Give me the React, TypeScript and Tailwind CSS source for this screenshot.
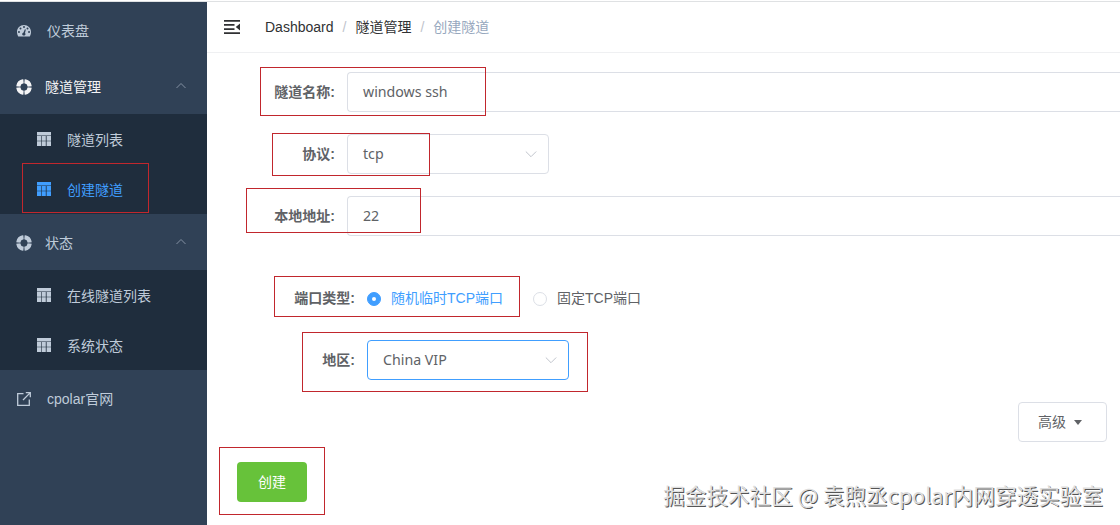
import type { ReactNode } from "react";
import clsx from "clsx";

interface IconProps {
  className?: string;
}

function DashboardIcon({ className }: IconProps) {
  return (
    <svg className={className} width="14" height="14" viewBox="0 0 128 128" fill="currentColor">
      <path
        fillRule="evenodd"
        d="M64 10C28.700 10 0 38.700 0 74c0 14 3.500 28 10.100 38.500 1 1.500 2.700 2.500 4.500 2.500h98.800c1.800 0 3.500-1 4.500-2.500C124.500 102 128 88 128 74c0-35.300-28.700-64-64-64zM18 65a9 9 0 1 1 0 18 9 9 0 0 1 0-18zm14-32a9 9 0 1 1 0 18 9 9 0 0 1 0-18zm32-14a9 9 0 1 1 0 18 9 9 0 0 1 0-18zm32 14a9 9 0 1 1 0 18 9 9 0 0 1 0-18zm14 32a9 9 0 1 1 0 18 9 9 0 0 1 0-18zM72 48l9 2-8 32c6 5 6 13 2 18-6 8-19 8-25 0-5-8-2-18 8-21z"
      />
    </svg>
  );
}

function RingIcon({ className }: IconProps) {
  return (
    <svg className={className} width="16" height="16" viewBox="0 0 16 16" fill="none" stroke="currentColor" strokeWidth="4">
      <circle cx="8" cy="8" r="5.700" opacity="0.350" />
      <circle cx="8" cy="8" r="5.700" pathLength="100" strokeDasharray="20.500 4.500" strokeDashoffset="-2.250" />
    </svg>
  );
}

function TableIcon({ className }: IconProps) {
  return (
    <svg className={className} width="14" height="14" viewBox="0 0 14 14" fill="currentColor">
      <path d="M0 0h14v3.600H0zM0 4h4.400v10H0zM5 4h3.800v10H5zM9.600 4H14v10H9.600z" />
      <path d="M0 9h14" stroke="#1f2d3d" strokeWidth="0.500" />
    </svg>
  );
}

function LinkIcon({ className }: IconProps) {
  return (
    <svg className={className} width="14" height="14" viewBox="0 0 14 14" fill="none" stroke="currentColor" strokeWidth="1.300">
      <path d="M6.500 1.700H.7v11.600h11.600V7.500M8.800.7h4.500v4.500M13.100.9 6 8" />
    </svg>
  );
}

function FoldIcon() {
  return (
    <svg width="16" height="14" viewBox="0 0 16 14" fill="currentColor">
      <path d="M0 0h16v1.700H0zM0 4h10.500v1.700H0zM0 8.200h10.500v1.700H0zM0 12.300h16V14H0zM16 3.500v7L11.800 7z" />
    </svg>
  );
}

function Chevron({ up, className }: IconProps & { up?: boolean }) {
  return (
    <svg className={className} width="12" height="12" viewBox="0 0 12 12" fill="none" stroke="currentColor">
      <path d={up ? "M1.500 8 6 3.500 10.500 8" : "M.8 3.500 6 8.700l5.200-5.200"} />
    </svg>
  );
}

function MenuItem({ icon, label }: { icon: ReactNode; label: string }) {
  return (
    <li className="flex h-14 items-center gap-4 pt-px pl-[17px]">
      {icon}
      <span>{label}</span>
    </li>
  );
}

function SubMenu({ label, active, children }: { label: string; active?: boolean; children: ReactNode }) {
  return (
    <li>
      <div className={clsx("flex h-14 items-center pt-0.5 pl-4", active && "text-[#f4f4f5]")}>
        <RingIcon />
        <span className="ml-[13px]">{label}</span>
        <Chevron up className="mr-5 mb-0.5 ml-auto text-[#8491a3]" />
      </div>
      <ul className="bg-[#1f2d3d]">{children}</ul>
    </li>
  );
}

function SubItem({ label, active }: { label: string; active?: boolean }) {
  return (
    <li className={clsx("flex h-[50px] items-center gap-4 pl-[37px]", active && "text-[#409eff]")}>
      <TableIcon />
      <span className="pt-0.5">{label}</span>
    </li>
  );
}

function Sidebar() {
  return (
    <nav className="w-[207px] shrink-0 bg-[#304156] text-[#bfcbd9]">
      <ul>
        <MenuItem icon={<DashboardIcon />} label="仪表盘" />
        <SubMenu label="隧道管理" active>
          <SubItem label="隧道列表" />
          <SubItem label="创建隧道" active />
        </SubMenu>
        <SubMenu label="状态">
          <SubItem label="在线隧道列表" />
          <SubItem label="系统状态" />
        </SubMenu>
        <MenuItem icon={<LinkIcon />} label="cpolar官网" />
      </ul>
    </nav>
  );
}

function FormRow({ label, nested, children }: { label: string; nested?: boolean; children: ReactNode }) {
  return (
    <div className="flex h-10 items-center">
      <span className={clsx("shrink-0 pr-3 text-right font-bold", nested ? "w-40" : "w-[140px]")}>{label}</span>
      {children}
    </div>
  );
}

const fieldFont = "font-['Noto_Sans','Noto_Sans_CJK_SC',sans-serif] text-[14.2px]";

function TextField({ value }: { value: string }) {
  return (
    <div className={clsx("flex h-10 flex-1 items-center rounded-l border border-r-0 border-[#dcdfe6] pl-[15px]", fieldFont)}>
      {value}
    </div>
  );
}

function SelectField({ value, focused }: { value: string; focused?: boolean }) {
  return (
    <div
      className={clsx(
        "flex h-10 w-[202px] items-center justify-between rounded border pr-[11px] pl-[15px]",
        fieldFont,
        focused ? "border-[#409eff]" : "border-[#dcdfe6]",
      )}
    >
      {value}
      <Chevron className="text-[#c0c4cc]" />
    </div>
  );
}

function Radio({ label, checked }: { label: string; checked?: boolean }) {
  return (
    <span className={clsx("flex items-center gap-[10px]", checked && "text-[#409eff]")}>
      <span
        className={clsx(
          "mt-px flex size-[14px] items-center justify-center rounded-full border",
          checked ? "border-[#409eff] bg-[#409eff]" : "border-[#dcdfe6] bg-white",
        )}
      >
        {checked && <span className="size-1 rounded-full bg-white" />}
      </span>
      {label}
    </span>
  );
}

// Red outlines that mark the fields to fill in
function Highlights() {
  return (
    <div className="pointer-events-none *:absolute *:border *:border-[#c1272d]">
      <div className="top-[163px] left-[22px] h-[50px] w-[127px]" />
      <div className="top-[67px] left-[260px] h-[49px] w-[226px]" />
      <div className="top-[133px] left-[272px] h-[43px] w-[158px]" />
      <div className="top-[188px] left-[246px] h-[45px] w-[175px]" />
      <div className="top-[276px] left-[274px] h-[41px] w-[246px]" />
      <div className="top-[332px] left-[302px] h-[60px] w-[286px]" />
      <div className="top-[447px] left-[219px] h-[68px] w-[106px]" />
    </div>
  );
}

export default function App() {
  return (
    <div className="relative flex h-[525px] w-[1120px] flex-col overflow-hidden bg-white font-['Liberation_Sans','Noto_Sans_CJK_SC',sans-serif] text-sm whitespace-nowrap text-[#606266]">
      <div className="h-0.5 shrink-0 border-b border-[#dfe1e3]" />
      <div className="flex min-h-0 flex-1">
        <Sidebar />
        <main className="min-w-0 flex-1">
          <header className="flex h-[51px] items-center border-b border-[#eff0f2] pl-[17px] text-[#303133]">
            <FoldIcon />
            <div className="ml-[25px] flex gap-[9px]">
              <span>Dashboard</span>
              <span className="text-[#c0c4cc]">/</span>
              <span>隧道管理</span>
              <span className="text-[#c0c4cc]">/</span>
              <span className="text-[#97a8be]">创建隧道</span>
            </div>
          </header>

          <div className="flex flex-col pt-[19px]">
            <div className="flex flex-col gap-[22px]">
              <FormRow label="隧道名称:">
                <TextField value="windows ssh" />
              </FormRow>
              <FormRow label="协议:">
                <SelectField value="tcp" />
              </FormRow>
              <FormRow label="本地地址:">
                <TextField value="22" />
              </FormRow>
            </div>

            <div className="mt-[42px] flex flex-col gap-[22px]">
              <FormRow label="端口类型:" nested>
                <div className="flex gap-[30px]">
                  <Radio label="随机临时TCP端口" checked />
                  <Radio label="固定TCP端口" />
                </div>
              </FormRow>
              <FormRow label="地区:" nested>
                <SelectField value="China VIP" focused />
              </FormRow>
            </div>

            <button
              type="button"
              className="mt-[22px] mr-[13px] flex h-10 w-[89px] items-center gap-2 self-end rounded border border-[#dcdfe6] pl-[19px]"
            >
              高级
              <span className="border-x-[4.5px] border-t-[5px] border-x-transparent border-t-[#606266]" />
            </button>
            <button type="button" className="mt-5 ml-[30px] h-10 w-[70px] rounded bg-[#67c23a] text-white">
              创建
            </button>
          </div>
        </main>
      </div>

      <Highlights />
      <div className="absolute right-[17px] bottom-[13px] font-['Noto_Sans_CJK_SC',sans-serif] text-[21.6px] leading-[34px] text-[#dedede] [text-shadow:1px_1px_0_#555]">
        掘金技术社区 @ 袁煦丞cpolar内网穿透实验室
      </div>
    </div>
  );
}
